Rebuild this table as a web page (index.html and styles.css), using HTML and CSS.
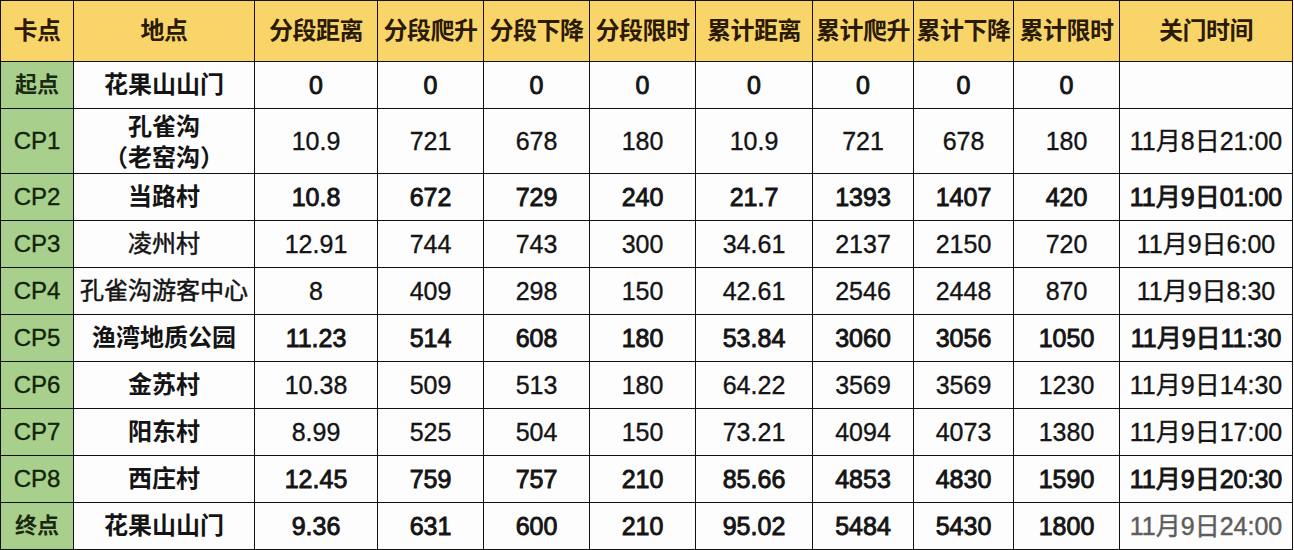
FILE: index.html
```html
<!DOCTYPE html>
<html lang="zh-CN">
<head>
<meta charset="utf-8">
<title>关门时间表</title>
<link rel="stylesheet" href="styles.css">
</head>
<body>
<table class="sched">
  <colgroup>
    <col class="c-cp"><col class="c-place"><col class="c-a"><col class="c-b"><col class="c-b"><col class="c-b"><col class="c-c"><col class="c-d"><col class="c-e"><col class="c-b"><col class="c-time">
  </colgroup>
  <thead>
    <tr class="head">
      <th>卡点</th><th>地点</th><th>分段距离</th><th>分段爬升</th><th>分段下降</th><th>分段限时</th><th>累计距离</th><th>累计爬升</th><th>累计下降</th><th>累计限时</th><th>关门时间</th>
    </tr>
  </thead>
  <tbody>
    <tr class="bold"><td class="cp cn">起点</td><td class="pl">花果山山门</td><td>0</td><td>0</td><td>0</td><td>0</td><td>0</td><td>0</td><td>0</td><td>0</td><td></td></tr>
    <tr class="tall"><td class="cp">CP1</td><td class="pl b">孔雀沟<br>（老窑沟）</td><td>10.9</td><td>721</td><td>678</td><td>180</td><td>10.9</td><td>721</td><td>678</td><td>180</td><td>11月8日21:00</td></tr>
    <tr class="bold"><td class="cp">CP2</td><td class="pl">当路村</td><td>10.8</td><td>672</td><td>729</td><td>240</td><td>21.7</td><td>1393</td><td>1407</td><td>420</td><td>11月9日01:00</td></tr>
    <tr><td class="cp">CP3</td><td class="pl">凌州村</td><td>12.91</td><td>744</td><td>743</td><td>300</td><td>34.61</td><td>2137</td><td>2150</td><td>720</td><td>11月9日6:00</td></tr>
    <tr><td class="cp">CP4</td><td class="pl">孔雀沟游客中心</td><td>8</td><td>409</td><td>298</td><td>150</td><td>42.61</td><td>2546</td><td>2448</td><td>870</td><td>11月9日8:30</td></tr>
    <tr class="bold"><td class="cp">CP5</td><td class="pl">渔湾地质公园</td><td>11.23</td><td>514</td><td>608</td><td>180</td><td>53.84</td><td>3060</td><td>3056</td><td>1050</td><td>11月9日11:30</td></tr>
    <tr><td class="cp">CP6</td><td class="pl b">金苏村</td><td>10.38</td><td>509</td><td>513</td><td>180</td><td>64.22</td><td>3569</td><td>3569</td><td>1230</td><td>11月9日14:30</td></tr>
    <tr><td class="cp">CP7</td><td class="pl b">阳东村</td><td>8.99</td><td>525</td><td>504</td><td>150</td><td>73.21</td><td>4094</td><td>4073</td><td>1380</td><td>11月9日17:00</td></tr>
    <tr class="bold"><td class="cp">CP8</td><td class="pl">西庄村</td><td>12.45</td><td>759</td><td>757</td><td>210</td><td>85.66</td><td>4853</td><td>4830</td><td>1590</td><td>11月9日20:30</td></tr>
    <tr class="bold"><td class="cp cn">终点</td><td class="pl">花果山山门</td><td>9.36</td><td>631</td><td>600</td><td>210</td><td>95.02</td><td>5484</td><td>5430</td><td>1800</td><td class="faded">11月9日24:00</td></tr>
  </tbody>
</table>
</body>
</html>
```

FILE: styles.css
```css
html, body {
  margin: 0;
  padding: 0;
  background: #ffffff;
}

.sched {
  table-layout: fixed;
  border-collapse: collapse;
  width: 1293px;
  font-family: "Liberation Sans", "Noto Sans CJK SC", sans-serif;
  font-size: 25px;
  color: #141414;
}

.c-cp { width: 73px; }
.c-place { width: 181px; }
.c-a { width: 123px; }
.c-b { width: 106px; }
.c-c { width: 117px; }
.c-d { width: 101px; }
.c-e { width: 100px; }
.c-time { width: 173px; }

.sched th,
.sched td {
  border: 1px solid #111;
  padding: 0;
  text-align: center;
  vertical-align: middle;
  white-space: nowrap;
  line-height: 28px;
}

.sched th {
  background: #f9d569;
  color: #2a1a06;
  font-weight: 700;
  font-size: 24px;
  height: 60px;
  letter-spacing: -0.5px;
}

.sched td {
  height: 46px;
  font-weight: 400;
  background: #fdfdfd;
  -webkit-text-stroke: 0.35px #141414;
}

.sched tr.tall td {
  height: 60px;
}

.sched tr.tall td.pl {
  line-height: 31px;
  padding-top: 2px;
}

.sched tr.bold td {
  -webkit-text-stroke: 0.9px #141414;
}

.sched tr td.pl {
  font-size: 24px;
  -webkit-text-stroke: 0.5px #141414;
}

.sched tr td.pl.b,
.sched tr.bold td.pl {
  font-weight: 700;
  -webkit-text-stroke: 0;
}

.sched tr td.cp {
  background: #a8cf8c;
  color: #10240a;
  font-weight: 400;
  font-size: 24px;
  -webkit-text-stroke: 0.35px #10240a;
}

.sched tr td.cn {
  font-weight: 700;
  font-size: 22px;
  color: #1a2a10;
  -webkit-text-stroke: 0;
}

.sched tr td.faded {
  color: #5a5a5a;
  -webkit-text-stroke: 0.5px #6a6a6a;
}
```
